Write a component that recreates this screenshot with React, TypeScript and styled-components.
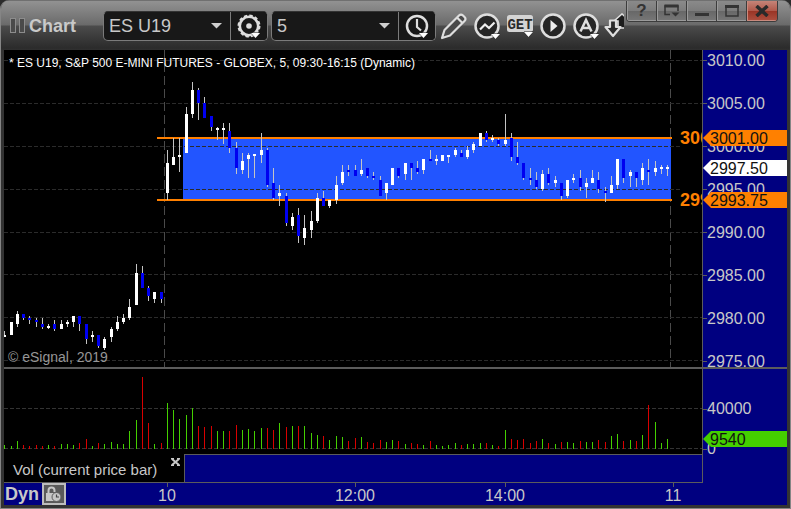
import React from "react";
import styled, { createGlobalStyle, css } from "styled-components";

const GlobalStyle = createGlobalStyle`
  * { box-sizing: border-box; }
  body { margin: 0; background: #2c2c2c; font-family: "Liberation Sans", Arial, sans-serif; }
  button, select { font-family: inherit; }
`;

const NAVY = "#000080";
const RULE = "#5c5c5c";
const LABEL = "#c8c8c8";
const ORANGE = "#ff8000";

/* ---------- data ---------- */

type Candle = [number, number, number, number, "W" | "B"];

// wick top, wick bottom, body top, body bottom, direction
const candles: Candle[] = [
  [331, 337, 335, 337, "W"], [322, 335, 322, 335, "W"], [311, 327, 314, 324, "W"], [314, 320, 314, 318, "B"],
  [316, 324, 318, 320, "B"], [318, 327, 320, 322, "B"], [318, 329, 324, 327, "B"], [324, 329, 326, 328, "W"],
  [320, 331, 324, 329, "B"], [320, 329, 324, 329, "W"], [320, 327, 322, 324, "W"], [316, 327, 316, 322, "W"],
  [316, 331, 316, 324, "B"], [324, 344, 324, 339, "B"], [331, 342, 335, 337, "W"], [335, 348, 335, 346, "B"],
  [337, 350, 339, 348, "W"], [327, 342, 329, 337, "W"], [316, 331, 322, 329, "W"], [314, 324, 318, 322, "W"],
  [299, 320, 307, 318, "W"], [264, 305, 273, 305, "W"], [266, 288, 273, 288, "B"], [286, 301, 288, 296, "B"],
  [292, 303, 292, 299, "W"], [292, 303, 292, 299, "B"], [150, 200, 163, 193, "W"], [138, 165, 157, 165, "W"],
  [138, 172, 155, 157, "W"], [107, 153, 114, 153, "W"], [82, 118, 90, 114, "W"], [88, 120, 90, 103, "B"],
  [97, 118, 103, 118, "B"], [116, 131, 116, 127, "B"], [127, 140, 128, 130, "W"], [123, 144, 128, 130, "W"],
  [123, 153, 131, 148, "B"], [142, 174, 148, 168, "B"], [153, 174, 161, 170, "W"], [153, 178, 155, 159, "W"],
  [154, 178, 154, 156, "W"], [133, 163, 150, 155, "W"], [148, 187, 150, 185, "B"], [168, 200, 183, 198, "B"],
  [185, 206, 193, 196, "W"], [193, 226, 196, 223, "B"], [213, 230, 217, 226, "W"], [208, 243, 215, 236, "B"],
  [215, 245, 228, 238, "W"], [211, 238, 221, 230, "W"], [193, 223, 198, 221, "W"], [191, 206, 198, 206, "B"],
  [200, 208, 200, 206, "W"], [176, 204, 185, 200, "W"], [165, 185, 172, 183, "W"], [165, 176, 170, 172, "B"],
  [165, 176, 170, 176, "B"], [159, 176, 170, 174, "W"], [168, 178, 168, 176, "B"], [172, 180, 176, 178, "B"],
  [176, 196, 180, 196, "B"], [183, 200, 183, 193, "W"], [168, 185, 168, 185, "W"], [168, 178, 168, 176, "B"],
  [163, 180, 163, 174, "W"], [163, 180, 163, 168, "B"], [161, 174, 168, 172, "B"], [159, 174, 159, 170, "W"],
  [150, 161, 159, 161, "B"], [155, 165, 159, 161, "W"], [155, 161, 155, 161, "W"], [155, 163, 155, 157, "W"],
  [148, 157, 150, 155, "W"], [150, 157, 153, 157, "B"], [146, 159, 150, 157, "W"], [142, 153, 144, 150, "W"],
  [133, 146, 133, 146, "W"], [131, 142, 133, 140, "B"], [135, 142, 138, 140, "W"], [138, 146, 140, 144, "B"],
  [114, 146, 140, 144, "W"], [133, 161, 138, 157, "B"], [142, 165, 157, 163, "B"], [163, 180, 163, 178, "B"],
  [168, 185, 178, 180, "B"], [172, 189, 180, 187, "B"], [170, 191, 174, 189, "W"], [168, 185, 174, 183, "B"],
  [176, 187, 180, 183, "W"], [183, 200, 183, 196, "B"], [180, 198, 180, 196, "W"], [174, 183, 178, 180, "W"],
  [170, 191, 178, 187, "B"], [178, 198, 183, 187, "W"], [170, 183, 178, 183, "W"], [172, 193, 180, 189, "B"],
  [187, 202, 191, 193, "B"], [176, 193, 185, 193, "W"], [159, 189, 159, 185, "W"], [159, 183, 159, 178, "B"],
  [170, 187, 172, 176, "W"], [172, 187, 172, 178, "B"], [163, 185, 168, 180, "W"], [159, 185, 170, 172, "B"],
  [161, 176, 168, 172, "W"], [165, 174, 167, 169, "W"], [165, 176, 167, 169, "W"],
];

const volumes = [
  4, 3, 8, 4, 3, 4, 3, 4, 3, 5, 5, 4, 6, 10, 3, 6, 5, 7, 5, 5, 18, 29, 72, 26, 5, 6, 46, 39, 30, 34, 41, 23, 22, 23,
  18, 18, 18, 24, 19, 20, 18, 21, 21, 19, 26, 22, 23, 23, 23, 16, 14, 13, 9, 13, 12, 8, 11, 12, 7, 6, 9, 7, 9, 8, 5,
  6, 5, 4, 8, 4, 3, 4, 6, 4, 5, 5, 6, 6, 4, 3, 19, 10, 9, 10, 6, 8, 10, 6, 5, 7, 7, 6, 8, 7, 7, 9, 7, 13, 15, 8, 9,
  8, 14, 44, 27, 6, 10,
];

const downVolume = new Set([
  3, 4, 5, 6, 8, 12, 13, 15, 22, 23, 25, 31, 32, 33, 36, 37, 42, 43, 45, 47, 51, 55, 56, 58, 59, 60, 63, 65, 66, 68,
  73, 77, 79, 81, 82, 83, 84, 85, 87, 89, 92, 95, 96, 99, 101, 103,
]);

const PANE_TOP = 50;
const PLOT_LEFT = 4;
const barX = (i: number) => Math.floor(4.79 + 6.254 * i) - PLOT_LEFT;

const prices = ["3010.00", "3005.00", "3000.00", "2995.00", "2990.00", "2985.00", "2980.00", "2975.00"];
const gridY = [10, 53, 96, 139, 182, 224, 267, 310];

/* ---------- window ---------- */

const Window = styled.div`
  background: #333;
  border: solid #858585;
  border-width: 0 1px 1px;
  border-radius: 9px 9px 0 0;
  overflow: hidden;
  position: relative;
`;

const Header = styled.header`
  height: 50px;
  display: flex;
  align-items: center;
  padding: 0 3px 0 9px;
  border-top: 1px solid #707070;
  background: linear-gradient(#929292 0, #6a6a6a 24px, #4b4b4b 25px, #2b2b2b 47px, #303030 100%);
`;

const Title = styled.h1`
  margin: 0 27px 0 3px;
  font-size: 18px;
  line-height: 22px;
  color: #c9c9c9;
`;

const ComboBox = styled.div`
  display: flex;
  width: 165px;
  height: 30px;
  margin-right: 3px;
  border: 1px solid #7b7b7b;
  border-top-color: #333;
  border-radius: 5px;
  background: #181818;
  overflow: hidden;
`;

const SelectWrap = styled.label`
  flex: 1;
  position: relative;
  display: flex;
  svg { position: absolute; right: 8px; top: 11px; pointer-events: none; }
`;

const Select = styled.select`
  width: 100%;
  appearance: none;
  border: 0;
  padding: 0 20px 0 5px;
  background: transparent;
  color: ${LABEL};
  font-size: 18px;
  outline: none;
`;

const ComboButton = styled.button`
  width: 37px;
  padding: 0;
  border: 0;
  border-left: 1px solid #7b7b7b;
  background: #181818;
  display: flex;
  align-items: center;
  justify-content: center;
`;

const Tools = styled.nav`
  display: flex;
  align-items: center;
  gap: 4px;
`;

const ToolButton = styled.button<{ $w?: number }>`
  width: ${(p) => p.$w ?? 29}px;
  height: 30px;
  flex: none;
  padding: 0;
  border: 0;
  background: none;
  display: flex;
  align-items: center;
  justify-content: center;
`;

const WindowControls = styled.div`
  position: absolute;
  top: 1px;
  right: 12px;
  display: flex;
  border: 1px solid #3c3c3c;
  border-top: 0;
  border-radius: 0 0 4px 4px;
  overflow: hidden;
`;

const ControlButton = styled.button<{ $close?: boolean }>`
  width: 30px;
  height: 20px;
  padding: 0;
  border: 0;
  border-right: 1px solid #3c3c3c;
  box-shadow: inset 1px -1px 0 #9a9a9a;
  background: linear-gradient(#8a8a8a, #7c7c7c 50%, #686868 52%, #777);
  display: flex;
  align-items: center;
  justify-content: center;
  &:last-child { border-right: 0; }
  ${(p) =>
    p.$close &&
    css`
      background: linear-gradient(#c58478, #b0584a 50%, #9a3526 52%, #ad5040);
      box-shadow: inset 1px -1px 0 #c98a7e;
    `}
`;

/* ---------- chart body ---------- */

const Body = styled.main`
  padding: 0 3px 3px;
`;

const PaneRow = styled.section<{ $h: number }>`
  display: flex;
  height: ${(p) => p.$h}px;
`;

const Plot = styled.div`
  flex: 1;
  min-width: 0;
  position: relative;
  background: #000;
  overflow: hidden;
`;

const PlotDrawing = styled.svg`
  display: block;
  width: 100%;
  height: 100%;
`;

const Axis = styled.aside`
  width: 85px;
  flex: none;
  position: relative;
  border-left: 1px solid ${RULE};
  background: ${NAVY};
  overflow: hidden;
`;

const Scale = styled.ol<{ $offset: number; $step: number }>`
  list-style: none;
  margin: ${(p) => p.$offset}px 0 0;
  padding: 0;
  li {
    display: flex;
    align-items: center;
    height: ${(p) => p.$step}px;
    font-size: 16px;
    color: ${LABEL};
  }
  li::before {
    content: "";
    width: 4px;
    height: 1px;
    background: ${RULE};
  }
`;

const PriceTag = styled.output<{ $top: number; $bg: string }>`
  position: absolute;
  top: ${(p) => p.$top}px;
  left: 0;
  right: 0;
  height: 16px;
  padding-left: 7px;
  font-size: 16px;
  line-height: 17px;
  color: #111;
  background: ${(p) => p.$bg};
  clip-path: polygon(0 50%, 8px 0, 100% 0, 100% 100%, 8px 100%);
`;

const Caption = styled.p`
  position: absolute;
  top: 5px;
  left: 5px;
  margin: 0;
  font-size: 12px;
  line-height: 16px;
  color: #fff;
  white-space: nowrap;
`;

const Copyright = styled.p`
  position: absolute;
  left: 4px;
  bottom: 1px;
  margin: 0;
  font-size: 14px;
  line-height: 18px;
  color: #969696;
`;

const LevelLabel = styled.span<{ $top: number }>`
  position: absolute;
  top: ${(p) => p.$top}px;
  right: 0;
  width: 22px;
  overflow: hidden;
  font-size: 18px;
  font-weight: bold;
  line-height: 22px;
  color: ${ORANGE};
  background: #000;
`;

const Divider = styled.hr`
  height: 2px;
  margin: 0;
  border: 0;
  background: ${RULE};
`;

const TabStrip = styled.div`
  flex: 1;
  display: flex;
  border: solid ${RULE};
  border-width: 1px 0;
  background: ${NAVY};
`;

const StudyTab = styled.div`
  width: 181px;
  display: flex;
  justify-content: space-between;
  padding: 0 4px 0 9px;
  margin-top: -1px;
  border-right: 1px solid ${RULE};
  background: #000;
  color: ${LABEL};
  font-size: 15px;
  line-height: 31px;
`;

const TabClose = styled.button`
  align-self: flex-start;
  display: flex;
  margin-top: 4px;
  padding: 0;
  border: 0;
  background: none;
`;

const TimeAxis = styled.footer`
  display: flex;
  height: 22px;
  padding-right: 85px;
  background: ${NAVY};
`;

const TimeTrack = styled.div`
  flex: 1;
  position: relative;
  display: flex;
  align-items: center;
  gap: 3px;
  padding-left: 1px;
`;

const Dyn = styled.strong`
  font-size: 18px;
  line-height: 22px;
  color: ${LABEL};
`;

const LockButton = styled.button`
  width: 24px;
  height: 22px;
  padding: 0;
  border: 2px solid #bdbdbd;
  background: #5a5a5a;
  display: flex;
  align-items: center;
  justify-content: center;
`;

const TimeLabel = styled.time<{ $at: number }>`
  position: absolute;
  top: 0;
  left: ${(p) => (p.$at / 698) * 100}%;
  width: 60px;
  margin-left: -30px;
  text-align: center;
  font-size: 16px;
  line-height: 26px;
  color: ${LABEL};
  &::before {
    content: "";
    position: absolute;
    left: 30px;
    top: 0;
    width: 1px;
    height: 4px;
    background: ${RULE};
  }
`;

/* ---------- icons ---------- */

const ICON = "#dedede";
const Caret = () => (
  <svg width="11" height="6" viewBox="0 0 11 6"><path d="M0 0h11L5.500 5.500z" fill="#cfcfcf" /></svg>
);

const CornerCaret = ({ x, y }: { x: number; y: number }) => (
  <path d={`M${x} ${y}h9l-4.500 5z`} fill="#fff" stroke="#222" strokeWidth="1" paintOrder="stroke" />
);

const Grip = () => (
  <svg width="16" height="17" viewBox="0 0 16 17" fill="none" stroke="#8c8c8c">
    <rect x=".5" y="1.500" width="5" height="14" fill="#4a4a4a" />
    <rect x="9.500" y="1.500" width="5" height="14" fill="#4a4a4a" />
  </svg>
);

const Gear = () => (
  <svg width="26" height="26" viewBox="0 0 26 26" fill="none">
    <circle cx="13" cy="13" r="9.200" stroke={ICON} strokeWidth="2.600" />
    <circle cx="13" cy="13" r="10.600" stroke={ICON} strokeWidth="1.800" strokeDasharray="3.400 2.150" />
    <circle cx="13" cy="13" r="2.800" fill={ICON} />
    <CornerCaret x={15} y={20} />
  </svg>
);

const Clock = () => (
  <svg width="26" height="26" viewBox="0 0 26 26" fill="none">
    <circle cx="13" cy="13" r="10" stroke={ICON} strokeWidth="2.500" />
    <path d="M13 6v8l4 3.500" stroke={ICON} strokeWidth="2.200" />
    <CornerCaret x={15} y={20} />
  </svg>
);

const Pencil = () => (
  <svg width="28" height="28" viewBox="0 0 28 28" fill="#4a4a4a" stroke={ICON} strokeWidth="2.200" strokeLinejoin="round">
    <path d="M2 26l2.500-8L19 3.500q2-2 4 0l1.500 1.500q2 2 0 4L10 23.500z" />
    <path d="M17 5.500l5.500 5.500" />
  </svg>
);

const Trend = () => (
  <svg width="28" height="28" viewBox="0 0 28 28" fill="none">
    <circle cx="14" cy="14" r="11.500" fill="#262626" stroke={ICON} strokeWidth="2.500" />
    <path d="M7 17.500l5-5 4 3.500 5.500-5.500" stroke="#eee" strokeWidth="2.200" />
    <CornerCaret x={18} y={22} />
  </svg>
);

const Get = () => (
  <svg width="28" height="28" viewBox="0 0 28 28">
    <rect x="1" y="3" width="26" height="17" rx="2.500" fill="#d4d4d4" />
    <text x="14" y="17" textAnchor="middle" fontFamily="Liberation Mono" fontWeight="bold" fontSize="14" fill="#2a2a2a">GET</text>
    <CornerCaret x={18} y={20} />
  </svg>
);

const Play = () => (
  <svg width="28" height="28" viewBox="0 0 28 28">
    <circle cx="14" cy="14" r="11.500" fill="#262626" stroke={ICON} strokeWidth="2.500" />
    <path d="M11.500 8l7 6-7 6z" fill="#eee" />
  </svg>
);

const LetterA = () => (
  <svg width="28" height="28" viewBox="0 0 28 28" fill="none">
    <circle cx="14" cy="14" r="11.500" fill="#262626" stroke={ICON} strokeWidth="2.500" />
    <path d="M8.500 19.500L14 8l5.500 11.500M10.500 16h7" stroke={ICON} strokeWidth="2.500" />
    <CornerCaret x={18} y={22} />
  </svg>
);

const SwapArrows = () => (
  <svg width="20" height="26" viewBox="0 0 20 26">
    <path d="M10 8l8-7 8 7h-4v7h-8V8z" fill="#1c1c1c" stroke={ICON} strokeWidth="1.600" />
    <path d="M6 7.500h6V14h4.500L9 23 1.500 14H6z" fill="#2a2a2a" stroke={ICON} strokeWidth="2.200" strokeLinejoin="round" />
  </svg>
);

const Dock = () => (
  <svg width="18" height="14" viewBox="0 0 18 14" fill="none" stroke="#333">
    <path d="M7 10.500H2V2h13v5" strokeWidth="1.500" /><path d="M1.500 2h14" strokeWidth="3" />
    <path d="M8.500 8.500h8l-4 4z" fill="#333" stroke="none" />
  </svg>
);
const Minimize = () => (
  <svg width="14" height="12" viewBox="0 0 14 12"><path d="M0 8h14v3H0z" fill="#333" /></svg>
);
const Maximize = () => (
  <svg width="14" height="12" viewBox="0 0 14 12" fill="none" stroke="#333">
    <path d="M1 1.500h12v9.500H1z" strokeWidth="1.500" /><path d="M0 1.500h14" strokeWidth="3" />
  </svg>
);
const CloseX = () => (
  <svg width="14" height="12" viewBox="0 0 14 12" fill="none" stroke="#2a2a2a">
    <path d="M1.500 1l11 10M12.500 1l-11 10" strokeWidth="3.500" />
  </svg>
);
const Question = styled.span`
  font-size: 17px;
  line-height: 18px;
  font-weight: bold;
  color: #333;
`;

const TabCloseX = () => (
  <svg width="9" height="8" viewBox="0 0 9 8" fill="none" stroke="#c8c8c8">
    <path d="M1 1l7 6M8 1L1 7" strokeWidth="2" />
    <path d="M0 .8h3M6 .8h3M0 7.200h3M6 7.200h3" strokeWidth="1.500" />
  </svg>
);

const LockClock = () => (
  <svg width="16" height="16" viewBox="0 0 16 16" fill="none">
    <path d="M2.500 8V4.500q0-3 3-3t3 3V6" stroke="#c6c6c6" strokeWidth="2" />
    <rect x="0" y="7" width="9" height="8" fill="#c6c6c6" />
    <circle cx="10.500" cy="11" r="4.500" fill="#c6c6c6" stroke="#5a5a5a" />
    <path d="M10.500 8.500V11h2.500" stroke="#444" strokeWidth="1.200" />
  </svg>
);

/* ---------- drawings ---------- */

const PriceDrawing = () => (
  <PlotDrawing viewBox="0 0 698 317" preserveAspectRatio="none" shapeRendering="crispEdges" role="img" aria-label="Price candles">
    {[160, 666].map((x) => (
      <path key={x} d={`M${x + 0.5} 0V317`} stroke="#4a4a4a" strokeDasharray="9 4" />
    ))}
    <rect x="179" y="88" width="488" height="62" fill="#2255ff" />
    {gridY.map((y) => (
      <path key={y} d={`M0 ${y + 0.5}H698`} stroke="#2b2b2b" strokeDasharray="4 2" />
    ))}
    <rect x="153" y="87" width="515" height="2" fill={ORANGE} />
    <rect x="153" y="149" width="515" height="2" fill={ORANGE} />
    {candles.map(([wt, wb, bt, bb, dir], i) => (
      <g key={i}>
        <rect x={barX(i)} y={wt - PANE_TOP} width="1" height={wb - wt} fill="#c4c4c4" />
        <rect x={barX(i) - 1} y={bt - PANE_TOP} width="3" height={bb - bt} fill={dir === "W" ? "#fff" : "#0000f0"} />
      </g>
    ))}
  </PlotDrawing>
);

const VolumeDrawing = () => (
  <PlotDrawing viewBox="0 0 698 85" preserveAspectRatio="none" shapeRendering="crispEdges" role="img" aria-label="Volume bars">
    {[39, 79].map((y) => (
      <path key={y} d={`M0 ${y + 0.5}H698`} stroke="#333" strokeDasharray="4 2" />
    ))}
    {volumes.map((v, i) => (
      <rect key={i} x={barX(i)} y={80 - v} width="1" height={v} fill={downVolume.has(i) ? "#d80000" : "#44d000"} />
    ))}
  </PlotDrawing>
);

/* ---------- app ---------- */

export default function App() {
  return (
    <>
      <GlobalStyle />
      <Window>
        <Header>
          <Grip />
          <Title>Chart</Title>
          <ComboBox>
            <SelectWrap>
              <Select aria-label="Symbol" defaultValue="ES U19"><option>ES U19</option></Select>
              <Caret />
            </SelectWrap>
            <ComboButton aria-label="Symbol settings"><Gear /></ComboButton>
          </ComboBox>
          <ComboBox>
            <SelectWrap>
              <Select aria-label="Interval" defaultValue="5"><option>5</option></Select>
              <Caret />
            </SelectWrap>
            <ComboButton aria-label="Time template"><Clock /></ComboButton>
          </ComboBox>
          <Tools>
            <ToolButton aria-label="Draw"><Pencil /></ToolButton>
            <ToolButton aria-label="Studies"><Trend /></ToolButton>
            <ToolButton aria-label="Get studies"><Get /></ToolButton>
            <ToolButton aria-label="Playback"><Play /></ToolButton>
            <ToolButton aria-label="Annotations"><LetterA /></ToolButton>
            <ToolButton aria-label="Trade" $w={20}><SwapArrows /></ToolButton>
          </Tools>
          <WindowControls>
            <ControlButton aria-label="Help"><Question>?</Question></ControlButton>
            <ControlButton aria-label="Dock"><Dock /></ControlButton>
            <ControlButton aria-label="Minimize"><Minimize /></ControlButton>
            <ControlButton aria-label="Maximize"><Maximize /></ControlButton>
            <ControlButton aria-label="Close" $close><CloseX /></ControlButton>
          </WindowControls>
        </Header>
        <Body>
          <PaneRow $h={317}>
            <Plot>
              <PriceDrawing />
              <Caption>* ES U19, S&amp;P 500 E-MINI FUTURES - GLOBEX, 5, 09:30-16:15 (Dynamic)</Caption>
              <Copyright>© eSignal, 2019</Copyright>
              <LevelLabel $top={77}>3001.00</LevelLabel>
              <LevelLabel $top={139}>2993.75</LevelLabel>
            </Plot>
            <Axis>
              <Scale $offset={-11} $step={43}>
                {prices.map((p) => <li key={p}>{p}</li>)}
              </Scale>
              <PriceTag $top={80} $bg={ORANGE}>3001.00</PriceTag>
              <PriceTag $top={110} $bg="#fff">2997.50</PriceTag>
              <PriceTag $top={142} $bg={ORANGE}>2993.75</PriceTag>
            </Axis>
          </PaneRow>
          <Divider />
          <PaneRow $h={85}>
            <Plot><VolumeDrawing /></Plot>
            <Axis>
              <Scale $offset={20} $step={40}>
                <li>40000</li>
                <li>0</li>
              </Scale>
              <PriceTag $top={62} $bg="#44d000">9540</PriceTag>
            </Axis>
          </PaneRow>
          <PaneRow $h={29}>
            <TabStrip>
              <StudyTab>
                Vol (current price bar)
                <TabClose aria-label="Close study"><TabCloseX /></TabClose>
              </StudyTab>
            </TabStrip>
            <Axis />
          </PaneRow>
          <TimeAxis>
            <TimeTrack>
              <Dyn>Dyn</Dyn>
              <LockButton aria-label="Lock time template"><LockClock /></LockButton>
              <TimeLabel $at={163}>10</TimeLabel>
              <TimeLabel $at={351}>12:00</TimeLabel>
              <TimeLabel $at={501}>14:00</TimeLabel>
              <TimeLabel $at={669}>11</TimeLabel>
            </TimeTrack>
          </TimeAxis>
        </Body>
      </Window>
    </>
  );
}
